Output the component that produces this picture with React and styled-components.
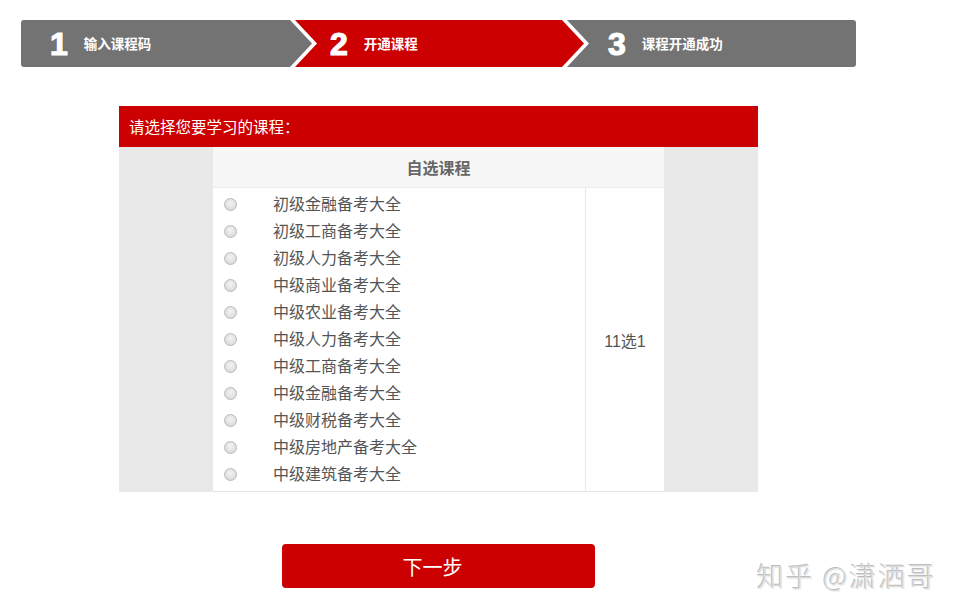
import React, { useState } from "react";
import styled, { createGlobalStyle } from "styled-components";

const RED = "#cc0000";
const GRAY = "#737373";

const GlobalStyle = createGlobalStyle`
  html, body {
    margin: 0;
    padding: 0;
    background: #fff;
  }
  body {
    font-family: "Liberation Sans", "Noto Sans CJK SC", sans-serif;
  }
`;

const Page = styled.div`
  position: relative;
  width: 962px;
  height: 615px;
  padding: 20px 0 0 21px;
  box-sizing: border-box;
  overflow: hidden;
`;

const Stepper = styled.div`
  display: flex;
  width: 835px;
  height: 47px;
  border-radius: 3px;
  overflow: hidden;
`;

const Step = styled.div`
  display: flex;
  align-items: center;
  gap: 16px;
  width: ${({ width }) => width}px;
  padding-left: ${({ pad }) => pad}px;
  box-sizing: border-box;
  background: ${({ active }) => (active ? RED : GRAY)};
  color: #fff;
`;

const StepNum = styled.span`
  font-family: "Liberation Sans", Arial, sans-serif;
  font-weight: 900;
  font-size: 32px;
  line-height: 1;
  -webkit-text-stroke: 1.2px #fff;
`;

const StepLabel = styled.span`
  font-size: 13.5px;
  font-weight: 700;
  line-height: 1;
  margin-top: 2px;
`;

const Sep = styled.svg`
  display: block;
  flex: none;
`;

const Separator = ({ from, to }) => (
  <Sep width="28" height="47" viewBox="0 0 28 47">
    <rect x="0" y="0" width="28" height="47" fill="#fff" />
    <polygon points="0,0 22,23.5 0,47" fill={from} />
    <polygon points="5,0 28,0 28,47 5,47 27,23.5" fill={to} />
  </Sep>
);

const Panel = styled.div`
  width: 639px;
  margin: 39px 0 0 98px;
`;

const PanelHead = styled.div`
  height: 41px;
  background: ${RED};
  color: #fff;
  font-family: "Noto Sans CJK SC", sans-serif;
  font-size: 15.5px;
  line-height: 41px;
  padding-left: 10px;
`;

const PanelBody = styled.div`
  background: #e9e9e9;
  padding: 0 94px;
`;

const Table = styled.div`
  background: #fff;
  border-bottom: 1px solid #e4e4e4;
`;

const TableHead = styled.div`
  height: 40px;
  background: #f7f7f7;
  border-bottom: 1px solid #ececec;
  display: flex;
  align-items: center;
  justify-content: center;
  font-size: 16px;
  font-weight: 700;
  color: #666;
`;

const TableRow = styled.div`
  display: flex;
`;

const Options = styled.div`
  width: 372px;
  padding: 4px 0 2px;
  display: flex;
  flex-direction: column;
`;

const Option = styled.label`
  display: flex;
  align-items: center;
  height: 27px;
  padding-left: 11px;
  font-size: 16px;
  color: #555;
  cursor: pointer;
`;

const OptionText = styled.span`
  line-height: 1;
  margin-top: -1px;
`;

const Radio = styled.input`
  appearance: none;
  -webkit-appearance: none;
  width: 13px;
  height: 13px;
  margin: -2px 36px 0 0;
  border-radius: 50%;
  border: 1px solid #b9b9b9;
  background: radial-gradient(circle at 50% 40%, #f4f4f4 0%, #dcdcdc 70%, #cfcfcf 100%);
  box-sizing: border-box;
  &:checked {
    background: radial-gradient(circle, #666 0 3px, #eee 3.5px);
  }
`;

const Rule = styled.div`
  flex: 1;
  border-left: 1px solid #e8e8e8;
  display: flex;
  align-items: center;
  justify-content: center;
  font-size: 16px;
  color: #555;
`;

const NextButton = styled.button`
  display: block;
  width: 313px;
  height: 44px;
  margin: 52px 0 0 261px;
  padding: 0 12px 0 0;
  border: none;
  border-radius: 4px;
  background: ${RED};
  color: #fff;
  font-family: "Noto Sans CJK SC", sans-serif;
  font-size: 20px;
  cursor: pointer;
`;

const Watermark = styled.div`
  position: absolute;
  left: 757px;
  top: 558px;
  font-size: 27px;
  line-height: 36px;
  color: #dcdcdc;
  letter-spacing: 2px;
  text-shadow: -1px -1px 0 #bdbdbd, 1px 1px 0 #f6f6f6;
  font-family: "Noto Sans CJK SC", sans-serif;
  font-weight: 300;
  white-space: nowrap;
`;

const courses = [
  "初级金融备考大全",
  "初级工商备考大全",
  "初级人力备考大全",
  "中级商业备考大全",
  "中级农业备考大全",
  "中级人力备考大全",
  "中级工商备考大全",
  "中级金融备考大全",
  "中级财税备考大全",
  "中级房地产备考大全",
  "中级建筑备考大全",
];

export default function App() {
  const [picked, setPicked] = useState(null);

  return (
    <Page>
      <GlobalStyle />
      <Stepper>
        <Step width={269} pad={29}>
          <StepNum>1</StepNum>
          <StepLabel>输入课程码</StepLabel>
        </Step>
        <Separator from={GRAY} to={RED} />
        <Step width={244} pad={12} active>
          <StepNum>2</StepNum>
          <StepLabel>开通课程</StepLabel>
        </Step>
        <Separator from={RED} to={GRAY} />
        <Step width={266} pad={18}>
          <StepNum>3</StepNum>
          <StepLabel>课程开通成功</StepLabel>
        </Step>
      </Stepper>

      <Panel>
        <PanelHead>请选择您要学习的课程：</PanelHead>
        <PanelBody>
          <Table>
            <TableHead>自选课程</TableHead>
            <TableRow>
              <Options>
                {courses.map((c, i) => (
                  <Option key={c}>
                    <Radio
                      type="radio"
                      name="course"
                      checked={picked === i}
                      onChange={() => setPicked(i)}
                    />
                    <OptionText>{c}</OptionText>
                  </Option>
                ))}
              </Options>
              <Rule>11选1</Rule>
            </TableRow>
          </Table>
        </PanelBody>
      </Panel>

      <NextButton>下一步</NextButton>
      <Watermark>知乎 @潇洒哥</Watermark>
    </Page>
  );
}
